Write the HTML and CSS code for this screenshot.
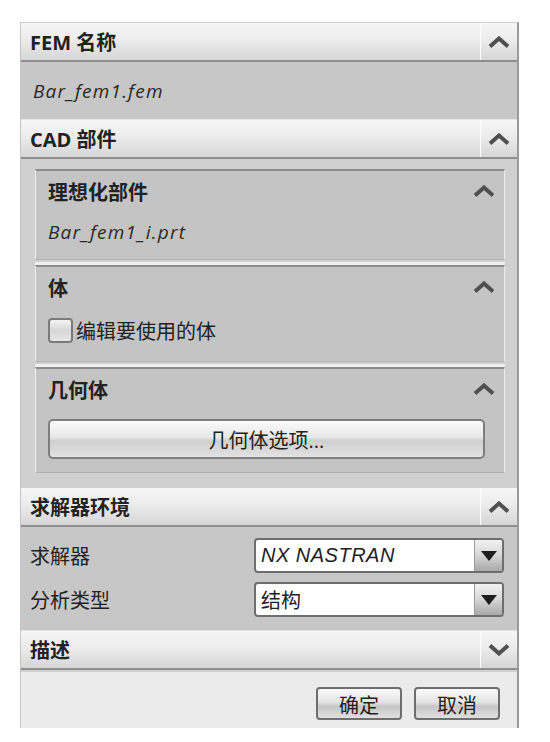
FILE: index.html
```html
<!DOCTYPE html>
<html lang="zh-CN">
<head>
    <meta charset="UTF-8">
    <meta name="viewport" content="width=device-width, initial-scale=1.0">
    <title>FEM 名称</title>
    <link rel="stylesheet" href="styles.css">
</head>
<body>
    <div class="panel">
        <div class="sec-head">
            <span class="sec-title">FEM 名称</span>
            <span class="toggle"><svg width="22" height="12" viewBox="0 0 22 12"><polyline points="2,10.5 11,2.5 20,10.5"/></svg></span>
        </div>
        <div class="sec-body fem-name">
            <span class="italic">Bar_fem1.fem</span>
        </div>

        <div class="sec-head">
            <span class="sec-title">CAD 部件</span>
            <span class="toggle"><svg width="22" height="12" viewBox="0 0 22 12"><polyline points="2,10.5 11,2.5 20,10.5"/></svg></span>
        </div>
        <div class="sec-body cad">
            <div class="group g-ideal">
                <div class="group-head">
                    <span>理想化部件</span>
                    <span class="toggle-sm"><svg width="22" height="12" viewBox="0 0 22 12"><polyline points="2,10.5 11,2.5 20,10.5"/></svg></span>
                </div>
                <div class="group-row"><span class="italic">Bar_fem1_i.prt</span></div>
            </div>
            <div class="group g-body">
                <div class="group-head">
                    <span>体</span>
                    <span class="toggle-sm"><svg width="22" height="12" viewBox="0 0 22 12"><polyline points="2,10.5 11,2.5 20,10.5"/></svg></span>
                </div>
                <label class="check-row"><span class="checkbox"></span>编辑要使用的体</label>
            </div>
            <div class="group g-geom">
                <div class="group-head">
                    <span>几何体</span>
                    <span class="toggle-sm"><svg width="22" height="12" viewBox="0 0 22 12"><polyline points="2,10.5 11,2.5 20,10.5"/></svg></span>
                </div>
                <button class="wide-btn" type="button">几何体选项...</button>
            </div>
        </div>

        <div class="sec-head">
            <span class="sec-title">求解器环境</span>
            <span class="toggle"><svg width="22" height="12" viewBox="0 0 22 12"><polyline points="2,10.5 11,2.5 20,10.5"/></svg></span>
        </div>
        <div class="sec-body solver">
            <div class="field">
                <span class="field-label">求解器</span>
                <div class="select"><span class="select-val italic latin">NX NASTRAN</span><span class="select-btn"><span class="tri"></span></span></div>
            </div>
            <div class="field">
                <span class="field-label">分析类型</span>
                <div class="select"><span class="select-val">结构</span><span class="select-btn"><span class="tri"></span></span></div>
            </div>
        </div>

        <div class="sec-head">
            <span class="sec-title">描述</span>
            <span class="toggle"><svg width="22" height="12" viewBox="0 0 22 12"><polyline points="2,1.5 11,9.5 20,1.5"/></svg></span>
        </div>

        <div class="footer">
            <button class="btn" type="button">确定</button>
            <button class="btn" type="button">取消</button>
        </div>
    </div>
</body>
</html>
```

FILE: styles.css
```css
body {
    margin: 0;
    background: #ffffff;
    font-family: "Open Sans", "Noto Sans CJK SC", sans-serif;
    color: #1a1a1a;
}
.panel {
    margin: 22px 0 0 20px;
    width: 496px;
    border-left: 1px solid #c4c4c4;
    border-right: 2px solid #9a9a9a;
    border-top: 1px solid #cfcfcf;
    background: #e8e8e8;
}
.sec-head {
    height: 37px;
    display: flex;
    align-items: stretch;
    background: linear-gradient(#f6f6f6, #ececec 45%, #d6d6d6);
    border-bottom: 2px solid #8e8e8e;
}
.sec-title {
    flex: 1;
    display: flex;
    align-items: center;
    padding-left: 9px;
    font-size: 20px;
    font-weight: bold;
    color: #222;
}
.toggle {
    width: 36px;
    border-left: 1px solid #ffffff;
    display: flex;
    align-items: center;
    justify-content: center;
}
svg polyline {
    fill: none;
    stroke: #505050;
    stroke-width: 4;
}
.italic {
    font-style: italic;
    letter-spacing: 1.2px;
}
.latin {
    font-family: "Liberation Sans", sans-serif;
    letter-spacing: 0.5px;
}
.sec-body {
    background: #c7c7c7;
}
.fem-name {
    height: 57px;
    display: flex;
    align-items: center;
    padding-left: 12px;
    font-size: 19px;
    color: #2a2a2a;
    border-bottom: 1px solid #e6e6e6;
}
.cad {
    padding: 10px 12px 15px 14px;
    background: #d0d0d0;
}
.group {
    background: #c4c4c4;
    border-top: 2px solid #8c8c8c;
    border-left: 1px solid #ededed;
    border-right: 1px solid #ededed;
    border-bottom: 1px solid #b0b0b0;
    padding: 0 0 0 12px;
}
.group + .group {
    margin-top: 5px;
    box-shadow: 0 -3px 0 #eeeeee;
}
.g-ideal {
    height: 88px;
}
.g-body {
    height: 94px;
}
.g-geom {
    height: 103px;
}
.group-head {
    height: 40px;
    display: flex;
    align-items: center;
    justify-content: space-between;
    font-size: 20px;
    font-weight: bold;
    color: #222;
}
.toggle-sm {
    width: 40px;
    display: flex;
    justify-content: center;
}
.group-row {
    height: 42px;
    display: flex;
    align-items: center;
    font-size: 19px;
    color: #2a2a2a;
}
.check-row {
    height: 46px;
    display: flex;
    align-items: center;
    font-size: 20px;
    color: #222;
}
.checkbox {
    width: 25px;
    height: 25px;
    border: 2px solid #7a7a7a;
    border-radius: 4px;
    background: linear-gradient(#f4f4f4, #d6d6d6 50%, #e6e6e6);
    margin-right: 3px;
    box-sizing: border-box;
}
.wide-btn {
    display: block;
    width: 437px;
    height: 40px;
    margin-top: 10px;
    border: 2px solid #7e7e7e;
    border-radius: 5px;
    background: linear-gradient(#fafafa, #e8e8e8 45%, #cfcfcf 55%, #e2e2e2);
    font-family: "Open Sans", "Noto Sans CJK SC", sans-serif;
    font-size: 20px;
    color: #222;
}
.solver {
    height: 104px;
    padding: 11px 0 0 9px;
    box-sizing: border-box;
    border-bottom: 1px solid #e0e0e0;
}
.field {
    display: flex;
    align-items: center;
    height: 35px;
    margin-bottom: 9px;
}
.field-label {
    width: 224px;
    font-size: 20px;
    color: #222;
}
.select {
    width: 250px;
    height: 35px;
    display: flex;
    border: 2px solid #6e6e6e;
    border-radius: 4px;
    background: #ffffff;
    box-sizing: border-box;
    overflow: hidden;
}
.select-val {
    flex: 1;
    display: flex;
    align-items: center;
    padding-left: 5px;
    font-size: 20px;
    color: #222;
}
.select-btn {
    width: 27px;
    display: flex;
    align-items: center;
    justify-content: center;
    border-left: 1px solid #9a9a9a;
    background: linear-gradient(#f2f2f2, #d6d6d6 50%, #a8a8a8);
}
.tri {
    width: 0;
    height: 0;
    border-left: 8px solid transparent;
    border-right: 8px solid transparent;
    border-top: 10px solid #1e1e1e;
}
.footer {
    height: 56px;
    display: flex;
    justify-content: flex-end;
    align-items: center;
    gap: 12px;
    padding-right: 17px;
    background: #ebebeb;
    border-top: 2px solid #d0d0d0;
}
.btn {
    width: 86px;
    height: 33px;
    border: 2px solid #6e6e6e;
    border-radius: 4px;
    background: linear-gradient(#fafafa, #e4e4e4 45%, #c6c6c6 60%, #e0e0e0);
    font-family: "Open Sans", "Noto Sans CJK SC", sans-serif;
    font-size: 20px;
    color: #222;
    margin-top: 6px;
}
```
